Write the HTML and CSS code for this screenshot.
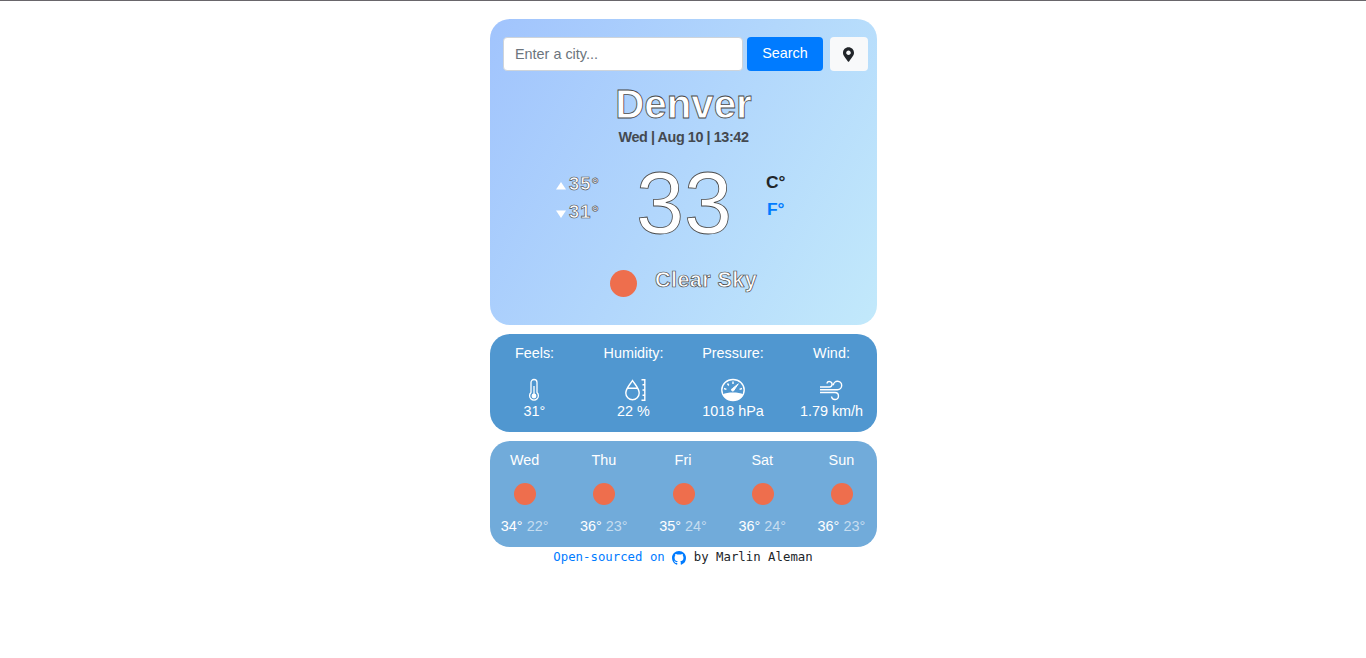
FILE: index.html
```html
<!DOCTYPE html>
<html lang="en">
<head>
<meta charset="utf-8">
<title>Weather</title>
<link rel="stylesheet" href="styles.css">
</head>
<body>
<main class="app">
  <section class="current">
    <form class="search">
      <input class="search-input" type="text" placeholder="Enter a city...">
      <button class="btn btn-search" type="button">Search</button>
      <button class="btn btn-locate" type="button" aria-label="Current location">
        <svg width="11" height="15" viewBox="0 0 384 512"><path fill="#212529" d="M172.3 501.7C27 291 0 269.400 0 192 0 86 86 0 192 0s192 86 192 192c0 77.400-27 99-172.300 309.700-9.500 13.800-29.900 13.800-39.400 0zM192 272c44.200 0 80-35.800 80-80s-35.800-80-80-80-80 35.800-80 80 35.800 80 80 80z"/></svg>
      </button>
    </form>
    <h1 class="city">Denver</h1>
    <p class="date">Wed | Aug 10 | 13:42</p>
    <div class="readings">
      <div class="range">
        <div class="range-row"><svg width="10" height="8" viewBox="0 0 10 8"><path fill="#fff" d="M5 0 10 7.500H0z"/></svg><span>35°</span></div>
        <div class="range-row"><svg width="10" height="8" viewBox="0 0 10 8"><path fill="#fff" d="M0 .5h10L5 8z"/></svg><span>31°</span></div>
      </div>
      <div class="temperature">33</div>
      <div class="units"><span>C°</span><a class="unit-link">F°</a></div>
    </div>
    <div class="condition"><span class="sun sun-large"></span><span class="condition-name">Clear Sky</span></div>
  </section>

  <section class="details">
    <div class="detail"><span>Feels:</span>
      <svg class="detail-icon" width="26" height="24" viewBox="0 0 26 24" fill="none" stroke="#fff" stroke-width="1.300"><path d="M10 14.500V4.500a3 3 0 0 1 6 0v10a4.400 4.400 0 1 1-6 0z"/><path d="M13 8v9"/><circle cx="13" cy="18" r="1.800" fill="#fff"/></svg>
      <span>31°</span></div>
    <div class="detail"><span>Humidity:</span>
      <svg class="detail-icon" width="26" height="24" viewBox="0 0 26 24" fill="none" stroke="#fff" stroke-width="1.400"><path d="M12.500 2.500C10 6.500 5.800 10.500 5.800 15a6.700 6.700 0 0 0 13.400 0c0-4.500-4.200-8.500-6.700-12.500zM7.700 10.200h9.600"/><path d="M21.500 1.700h3.300v20.600h-3.300M22.500 6.800h2.300M22.500 12h2.300M22.500 17.200h2.300"/></svg>
      <span>22 %</span></div>
    <div class="detail"><span>Pressure:</span>
      <svg class="detail-icon" width="26" height="24" viewBox="0 0 26 24" fill="none" stroke="#fff" stroke-width="1.400"><ellipse cx="13" cy="12" rx="11.200" ry="10.500"/><path fill="#fff" stroke="none" d="M2.500 16.500c2.500-1.500 6.500-2 10.500-2s8 .5 10.500 2c-2.200 3.500-5.500 6-10.500 6s-8.300-2.500-10.500-6z"/><path d="M13 3.500V6M7.500 5.500l1.300 2M4 10.500l2.400.8M22 10.500l-2.400.8"/><path fill="#fff" stroke-width="1" d="m18.300 5.800-5.700 4.700a1.300 1.300 0 1 0 1.500 1.500z"/></svg>
      <span>1018 hPa</span></div>
    <div class="detail"><span>Wind:</span>
      <svg class="detail-icon" width="26" height="24" viewBox="0 0 26 24" fill="none" stroke="#fff" stroke-width="1.400"><path d="M2 9h9.500a2.700 2.700 0 1 0-2.700-3.600M2 11.700h17.500a4.200 4.200 0 1 0-4.200-4.400M2 14.500h15a3.500 3.500 0 1 1-3.500 4"/></svg>
      <span>1.79 km/h</span></div>
  </section>

  <section class="forecast">
    <div class="day"><span>Wed</span><span class="sun"></span><span>34° <span class="low">22°</span></span></div>
    <div class="day"><span>Thu</span><span class="sun"></span><span>36° <span class="low">23°</span></span></div>
    <div class="day"><span>Fri</span><span class="sun"></span><span>35° <span class="low">24°</span></span></div>
    <div class="day"><span>Sat</span><span class="sun"></span><span>36° <span class="low">24°</span></span></div>
    <div class="day"><span>Sun</span><span class="sun"></span><span>36° <span class="low">23°</span></span></div>
  </section>

  <footer class="credit"><a class="credit-link">Open-sourced on</a><svg width="14" height="14" viewBox="0 0 16 16"><path fill="#007bff" d="M8 0C3.580 0 0 3.580 0 8c0 3.540 2.290 6.530 5.470 7.590.4.070.550-.170.550-.380 0-.190-.010-.820-.010-1.490-2.010.370-2.530-.490-2.690-.940-.090-.230-.480-.940-.820-1.130-.280-.150-.680-.520-.010-.530.630-.010 1.080.580 1.230.820.720 1.210 1.870.870 2.330.660.070-.520.280-.870.510-1.070-1.780-.2-3.640-.890-3.640-3.950 0-.870.310-1.590.820-2.150-.080-.2-.360-1.020.080-2.120 0 0 .670-.210 2.200.820.640-.180 1.320-.270 2-.270s1.360.090 2 .270c1.530-1.040 2.200-.820 2.200-.820.440 1.100.160 1.920.080 2.120.510.560.820 1.270.820 2.150 0 3.070-1.870 3.750-3.650 3.950.290.250.540.730.540 1.480 0 1.070-.010 1.930-.010 2.200 0 .210.150.460.550.380A8.010 8.010 0 0 0 16 8c0-4.420-3.580-8-8-8z"/></svg><span>by Marlin Aleman</span></footer>
</main>
</body>
</html>
```
FILE: styles.css
```css
* { box-sizing: border-box; }

body {
  margin: 0;
  height: 658px;
  padding-left: 1px;
  border-top: 1px solid #69666b;
  background: #fff;
  color: #212529;
  font: 14.4px/21.6px "Liberation Sans", Arial, sans-serif;
}

.app { width: 387px; margin: 0 auto; padding-top: 18px; }

.current {
  height: 306px;
  padding: 18px 9px 0 13px;
  border-radius: 20px;
  background: linear-gradient(120deg, #a1c4fd 0%, #c2e9fb 100%);
}

.search { display: flex; height: 34px; }
.search-input {
  width: 240px;
  margin-right: 4px;
  padding: 1px 11px 0;
  border: 1px solid #ced4da;
  border-radius: 4px;
  background: #fff;
  font: inherit;
}
.search-input::placeholder { color: #6c757d; opacity: 1; }

.btn { border: 0; border-radius: 4px; padding: 0; font: inherit; }
.btn-search { width: 76px; margin-right: 7px; padding-bottom: 1px; background: #007bff; color: #fff; }
.btn-locate { display: flex; align-items: center; justify-content: center; width: 38px; padding-right: 1px; background: #f8f9fa; }

.city, .temperature, .range, .condition-name { color: #fff; -webkit-text-stroke: .8px #4a4a4a; }
.city { margin: 10px 0 0; padding-right: 4px; text-align: center; font-size: 40.3px; line-height: 48px; }
.date { margin: -4px 0 0; padding-right: 4px; text-align: center; font-size: 14.4px; letter-spacing: -.42px; font-weight: 700; color: #444950; line-height: 24px; }

.readings { display: grid; grid-template-columns: 54px 79px 93px 37px 30px; height: 103px; }
.range { grid-column: 1 / 3; padding: 21px 0 0 53px; font-weight: 700; font-size: 18.4px; line-height: 28px; letter-spacing: 1px; -webkit-text-stroke-width: .6px; }
.range-row { display: flex; align-items: center; gap: 3px; }
.range-row svg { margin-top: 3px; }
.temperature { font-size: 86.4px; line-height: 109px; }
.units { grid-column: 5; display: flex; flex-direction: column; padding-top: 20px; font-weight: 700; font-size: 17.4px; line-height: 27px; }
.unit-link { padding-left: 1px; color: #007bff; }

.condition { display: flex; gap: 18px; padding: 11px 0 0 107px; }
.sun { display: block; width: 22px; height: 22px; border-radius: 50%; background: #ee6e4d; }
.sun-large { width: 27px; height: 27px; margin-top: 7px; }
.condition-name { font-size: 21.6px; font-weight: 700; line-height: 34px; letter-spacing: .4px; -webkit-text-stroke-width: .7px; }

.details {
  display: grid;
  grid-template-columns: 89px 109px 90px 107px;
  height: 98px;
  margin-top: 9px;
  padding-top: 9px;
  border-radius: 20px;
  background: #5097d0;
  color: #fff;
}
.detail { display: flex; flex-direction: column; align-items: center; }
.detail-icon { margin: 13px 1px -1px 0; }

.forecast {
  display: grid;
  grid-template-columns: repeat(5, 79.2px);
  justify-content: center;
  height: 106px;
  margin-top: 9px;
  padding-top: 9px;
  padding-right: 1px;
  border-radius: 20px;
  background: #71abda;
  color: #fff;
}
.day { display: flex; flex-direction: column; align-items: center; }
.day .sun { margin: 11px 0 11px 1px; }
.low { color: #c6ddf0; }

.credit { display: flex; align-items: center; justify-content: center; gap: 7.500px; font: 12.350px/21px "DejaVu Sans Mono", monospace; padding-right: 1px; }
.credit-link { color: #007bff; }
```
